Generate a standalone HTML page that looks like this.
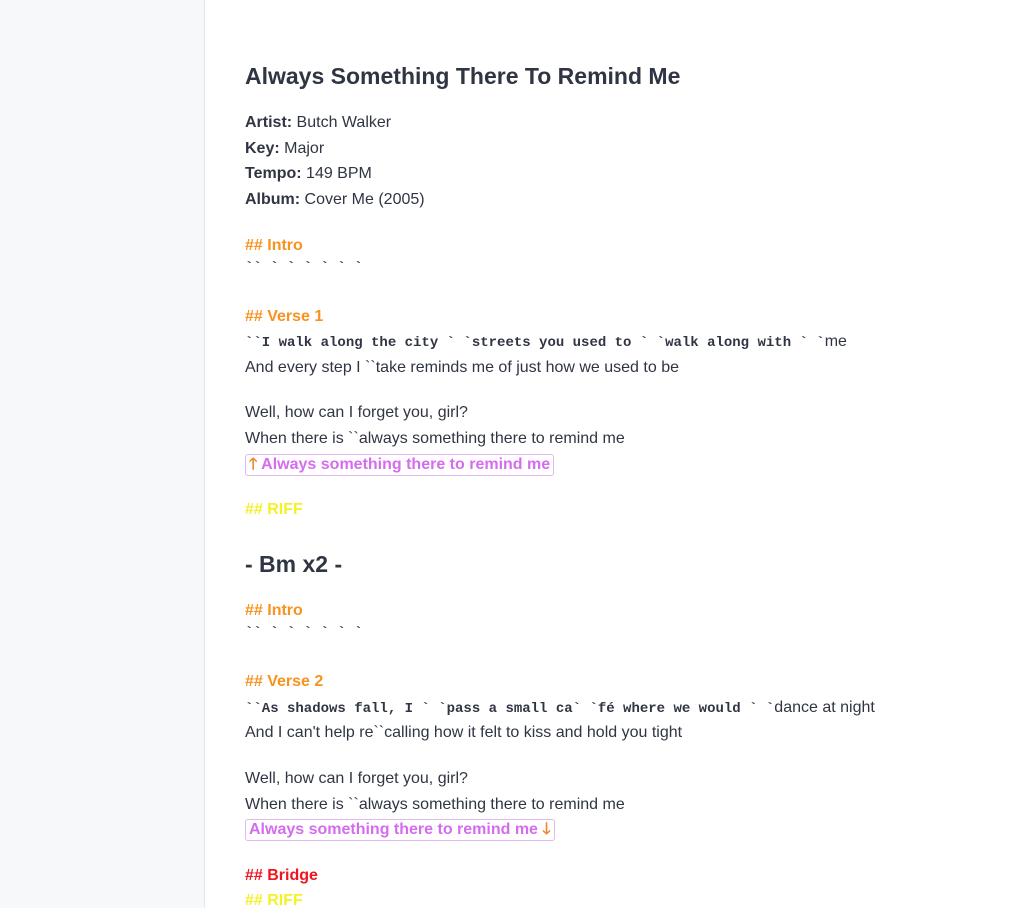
<!DOCTYPE html>
<html><head><meta charset="utf-8"><style>
body{margin:0;width:1036px;height:908px;overflow:hidden;background:#fff;font-family:"Liberation Sans",sans-serif;color:#2f3542;font-size:16px;position:relative}
.sb{position:absolute;left:0;top:0;width:204px;height:908px;background:#f7f8fa;border-right:1px solid #e3e6ea}
.l{position:absolute;left:245px;line-height:24px;white-space:pre}
.h{font-weight:bold;font-size:16px}
.o{color:#f7931e}.y{color:#f4f127}.r{color:#f0141e}
.m{font-family:"Liberation Mono",monospace;font-weight:bold;font-size:14px}
.box{border:1px solid #e2b8f2;border-radius:3px;color:#d56cf0;font-weight:bold;padding:0 3px;line-height:20px;font-size:16px}
.ar{color:#f0872a;font-weight:bold}
</style></head><body>
<div class="sb"></div>
<div class="l" style="top:62px;font-size:23px;font-weight:bold;line-height:28px">Always Something There To Remind Me</div>
<div class="l" style="top:111px"><b>Artist:</b> Butch Walker</div>
<div class="l" style="top:137px"><b>Key:</b> Major</div>
<div class="l" style="top:162px"><b>Tempo:</b> 149 BPM</div>
<div class="l" style="top:188px"><b>Album:</b> Cover Me (2005)</div>
<div class="l h o" style="top:234px">## Intro</div>
<div class="l m" style="top:256px">`` ` ` ` ` ` `</div>
<div class="l h o" style="top:305px">## Verse 1</div>
<div class="l" style="top:330px"><span class="m">``I walk along the city ` `streets you used to ` `walk along with ` `</span>me</div>
<div class="l" style="top:356px">And every step I ``take reminds me of just how we used to be</div>
<div class="l" style="top:401px">Well, how can I forget you, girl?</div>
<div class="l" style="top:427px">When there is ``always something there to remind me</div>
<div class="l box" style="top:454px"><span class="ar">🡑</span> Always something there to remind me</div>
<div class="l h y" style="top:498px">## RIFF</div>
<div class="l" style="top:550px;font-size:23px;font-weight:bold;line-height:28px">- Bm x2 -</div>
<div class="l h o" style="top:599px">## Intro</div>
<div class="l m" style="top:621px">`` ` ` ` ` ` `</div>
<div class="l h o" style="top:670px">## Verse 2</div>
<div class="l" style="top:696px"><span class="m">``As shadows fall, I ` `pass a small ca` `fé where we would ` `</span>dance at night</div>
<div class="l" style="top:721px">And I can't help re``calling how it felt to kiss and hold you tight</div>
<div class="l" style="top:767px">Well, how can I forget you, girl?</div>
<div class="l" style="top:793px">When there is ``always something there to remind me</div>
<div class="l box" style="top:819px">Always something there to remind me <span class="ar">🡓</span></div>
<div class="l h r" style="top:864px">## Bridge</div>
<div class="l h y" style="top:889px">## RIFF</div>
</body></html>
